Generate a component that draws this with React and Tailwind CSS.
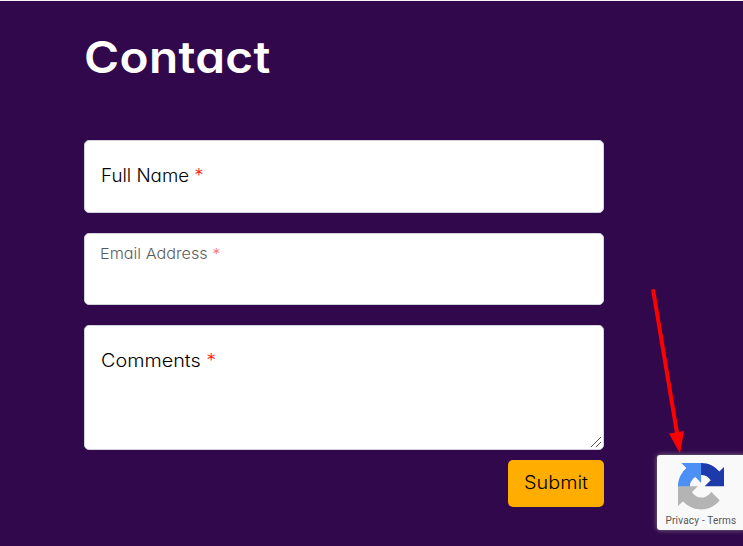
function Required() {
  return <span className="font-light text-[#ff1a1a]">*</span>;
}

function RecaptchaLogo() {
  return (
    <svg viewBox="0 0 64 64" className="h-[46.5px] w-[46.5px]">
      <path fill="#1c3aa9" d="M64 31.955l-.033-1.37V4.687l-7.16 7.16C50.948 4.674 42.033.093 32.05.093c-10.4 0-19.622 4.96-25.458 12.64l11.736 11.86a15.55 15.55 0 0 1 4.754-5.334c2.05-1.6 4.952-2.906 8.968-2.906.485 0 .86.057 1.135.163 4.976.393 9.288 3.14 11.828 7.124l-8.307 8.307L64 31.953" />
      <path fill="#4c90f5" d="M31.862.094l-1.37.033H4.594l7.16 7.16C4.58 13.147 0 22.06 0 32.046c0 10.4 4.96 19.622 12.64 25.458L24.5 45.768a15.55 15.55 0 0 1-5.334-4.754c-1.6-2.05-2.906-4.952-2.906-8.968 0-.485.057-.86.163-1.135.393-4.976 3.14-9.288 7.124-11.828l8.307 8.307L31.86.095" />
      <path fill="#b4b4b4" d="M.001 32.045l.033 1.37v25.898l7.16-7.16c5.86 7.173 14.774 11.754 24.76 11.754 10.4 0 19.622-4.96 25.458-12.64l-11.736-11.86a15.55 15.55 0 0 1-4.754 5.334c-2.05 1.6-4.952 2.906-8.968 2.906-.485 0-.86-.057-1.135-.163-4.976-.393-9.288-3.14-11.828-7.124l8.307-8.307c-10.522.04-22.4.066-27.295-.005" />
    </svg>
  );
}

export default function App() {
  return (
    <div className="relative h-[546px] w-[743px] overflow-hidden border-t border-[#f4f4f4] bg-[#32084d] font-['Inter',sans-serif] [font-feature-settings:'cv11']">
      <main className="ml-[84px] flex w-[520px] flex-col">
        <h1 className="mt-[26px] h-[60px] origin-left scale-x-[1.085] text-[44px] leading-[60px] font-semibold tracking-[0.3px] text-white">Contact</h1>
        <form className="mt-[53px] flex flex-col">
          <label className="flex h-[73px] items-center rounded-[5px] border border-[#ced4da] bg-white px-4 pb-0.5 text-[18px] font-light text-black">
            <span className="inline-block origin-left scale-x-[1.04]">Full Name <Required /></span>
          </label>
          <label className="mt-5 h-[72px] rounded-[5px] border border-[#ced4da] bg-white px-[15px] pt-2 text-[15px] leading-6 font-light text-black">
            <span className="inline-block origin-left scale-x-[1.08] opacity-65">Email Address <Required /></span>
          </label>
          <label className="relative mt-5 h-[125px] rounded-[5px] border border-[#ced4da] bg-white px-4 pt-[23px] text-[18px] leading-6 font-light text-black">
            <span className="inline-block origin-left scale-x-[1.1]">Comments <Required /></span>
            <svg viewBox="0 0 12 12" className="absolute right-[1px] bottom-[1px] h-3 w-3" stroke="#555" strokeWidth="1">
              <path d="M1 11 11 1M6 11l5-5" />
            </svg>
          </label>
          <button type="button" className="mt-[10px] h-[47px] w-24 self-end rounded-[5px] bg-[#ffae00] pb-0.5 text-[18px] font-light text-black">
            <span className="inline-block scale-x-[1.1]">Submit</span>
          </button>
        </form>
      </main>

      <aside className="absolute top-[454px] left-[657px] flex h-[75px] w-[90px] flex-col rounded-[3px] bg-[#f9f9f9] pt-2 shadow-[0_0_5px_gray]">
        <div className="ml-[20.5px] h-[47px]"><RecaptchaLogo /></div>
        <p className="ml-[8.5px] mt-[3px] font-['Roboto',sans-serif] text-[10px] leading-[15px] tracking-[0.2px] whitespace-nowrap text-[#555]">Privacy - Terms</p>
      </aside>

      <svg viewBox="640 280 60 180" className="absolute top-[279px] left-[640px] h-[180px] w-[60px]">
        <path d="M653.3 291 677 433" stroke="#f00" strokeWidth="4" strokeLinecap="round" />
        <path d="M669 433.5 684 431 680 453.5Z" fill="#f00" />
      </svg>
    </div>
  );
}
